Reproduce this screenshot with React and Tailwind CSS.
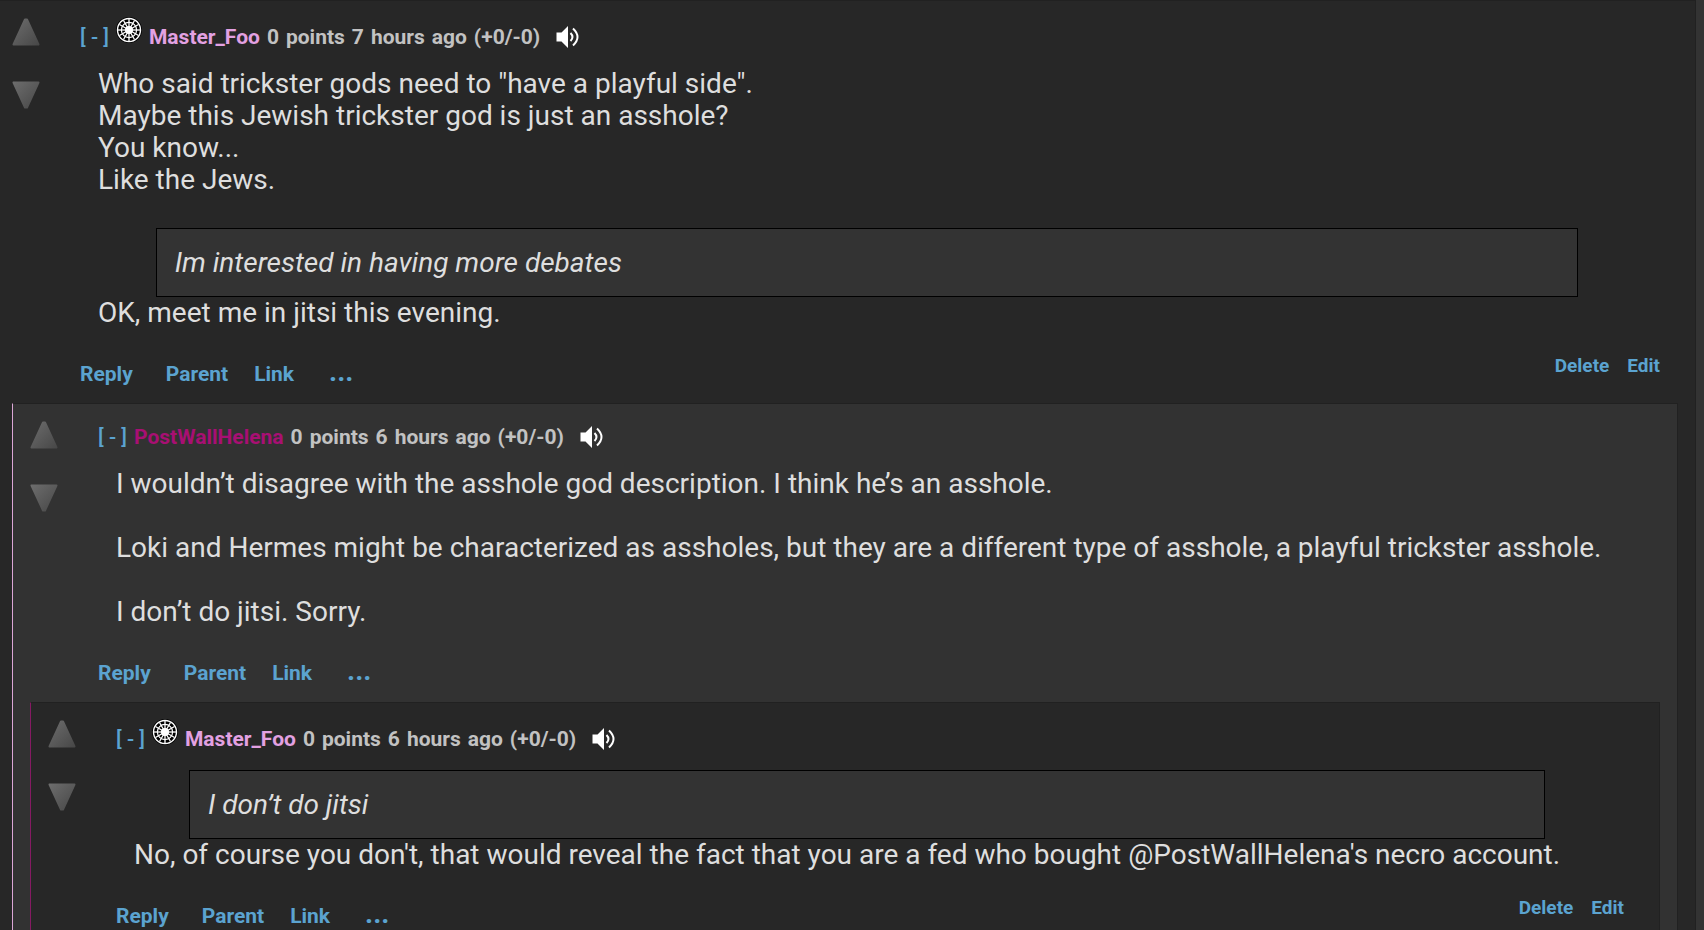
const thread = {
    id: 1,
    author: 'Master_Foo',
    age: '7 hours ago',
    mine: true,
    body: [
        {
            type: 'text',
            lines: [
                'Who said trickster gods need to "have a playful side".',
                'Maybe this Jewish trickster god is just an asshole?',
                'You know...',
                'Like the Jews.',
            ],
        },
        { type: 'quote', lines: ['Im interested in having more debates'] },
        { type: 'text', lines: ['OK, meet me in jitsi this evening.'] },
    ],
    replies: [
        {
            id: 2,
            author: 'PostWallHelena',
            age: '6 hours ago',
            mine: false,
            body: [
                { type: 'text', lines: ['I wouldn’t disagree with the asshole god description. I think he’s an asshole.'] },
                {
                    type: 'text',
                    lines: ['Loki and Hermes might be characterized as assholes, but they are a different type of asshole, a playful trickster asshole.'],
                },
                { type: 'text', lines: ['I don’t do jitsi. Sorry.'] },
            ],
            replies: [
                {
                    id: 3,
                    author: 'Master_Foo',
                    age: '6 hours ago',
                    mine: true,
                    body: [
                        { type: 'quote', lines: ['I don’t do jitsi'] },
                        {
                            type: 'text',
                            lines: ["No, of course you don't, that would reveal the fact that you are a fed who bought @PostWallHelena's necro account."],
                        },
                    ],
                    replies: [],
                },
            ],
        },
    ],
};

// background and left edge for each nesting level
const levels = [
    'bg-[#272727] border-l-[#272727] -ml-[6px] mr-2',
    'bg-[#323232] border-l-[#dba6d6] ml-[17px] mr-[17px]',
    'bg-[#272727] border-l-[#861a63] ml-[17px] mr-[17px]',
];

export default function App() {
    return (
        <main className="overflow-x-hidden bg-[#333333] font-['Roboto',sans-serif] text-[#dedede]">
            <Comment comment={thread} depth={0} />
        </main>
    );
}

function Comment({ comment, depth }) {
    return (
        <article className={`border-t border-r border-l border-t-[#212121] border-r-[#212121] ${levels[depth]}`}>
            <div className="flex pl-[17px] pr-[35px]">
                <Votes />
                <div className="ml-10 min-w-0 flex-1 pt-4">
                    <Header comment={comment} />
                    <Body blocks={comment.body} />
                    <Actions mine={comment.mine} />
                </div>
            </div>
            {comment.replies.map((reply) => (
                <Comment key={reply.id} comment={reply} depth={depth + 1} />
            ))}
        </article>
    );
}

function Votes() {
    return (
        <div className="flex w-7 shrink-0 flex-col gap-[35px] pt-[17px]">
            <button type="button" aria-label="Upvote" className="cursor-pointer">
                <Arrow />
            </button>
            <button type="button" aria-label="Downvote" className="cursor-pointer">
                <Arrow down />
            </button>
        </div>
    );
}

function Arrow({ down }) {
    const id = down ? 'arrow-down' : 'arrow-up';
    return (
        <svg className="block size-7" viewBox="0 0 28 28">
            <defs>
                <linearGradient id={id} x1="0" y1="0" x2="1" y2="1">
                    <stop offset="0" stopColor="#6c6c6c" />
                    <stop offset="1" stopColor="#484848" />
                </linearGradient>
            </defs>
            <path
                d={down ? 'M1.5 1.5h25L15 26.5h-2z' : 'M13 1.5h2L26.5 26.5h-25z'}
                fill={`url(#${id})`}
                stroke={`url(#${id})`}
                strokeWidth="2"
                strokeLinejoin="round"
            />
        </svg>
    );
}

function Header({ comment }) {
    return (
        <header className={`flex items-end text-[21px]/6 font-bold text-[#c2c2c2] ${comment.mine ? 'h-8' : 'h-[29px]'}`}>
            <button type="button" className="cursor-pointer font-medium text-[#5ba3d0]">[ - ]</button>
            {comment.mine && <Badge />}
            <a href="#user" className={`ml-[7px] ${comment.mine ? 'text-[#e3a1e2]' : 'text-[#a80f73]'}`}>
                {comment.author}
            </a>
            <div className="ml-[7px] flex gap-[7px]">
                <span>0</span>
                <span>points</span>
                <time className="flex gap-[7px]">
                    {comment.age.split(' ').map((word) => (
                        <span key={word}>{word}</span>
                    ))}
                </time>
                <span>(+0/-0)</span>
            </div>
            <button type="button" aria-label="Read aloud" className="ml-4 cursor-pointer text-white">
                <Speaker />
            </button>
        </header>
    );
}

function Badge() {
    const spokes = Array.from({ length: 12 }, (_, i) => i * 30);
    return (
        <svg className="ml-[7px] size-[26px] self-start" viewBox="0 0 26 26" fill="none">
            <circle cx="13" cy="13" r="13" fill="#000" />
            <circle cx="13" cy="13" r="11.5" stroke="#fff" strokeWidth="1.4" />
            <circle cx="13" cy="13" r="7.6" stroke="#fff" strokeWidth="1.2" />
            <circle cx="13" cy="13" r="4" fill="#fff" />
            {spokes.map((angle) => (
                <path key={angle} d="M13 13V2" stroke="#fff" strokeWidth="1.3" transform={`rotate(${angle} 13 13)`} />
            ))}
        </svg>
    );
}

function Speaker() {
    return (
        <svg className="block size-6" viewBox="0 0 24 24" fill="none" stroke="currentColor">
            <path d="M0.500 7.500h5l6.500-6.500v22l-6.500-6.500h-5z" fill="currentColor" stroke="none" />
            <path d="M14.500 8q4 4 0 8" strokeWidth="2" />
            <path d="M17 3.500q9 8.500 0 17" strokeWidth="2" />
        </svg>
    );
}

function Body({ blocks }) {
    return (
        <div className="mt-[19px] mr-6 mb-[31px] ml-[18px] text-[28px]/8">
            {blocks.map((block, i) => {
                const text = block.lines.map((line) => (
                    <span key={line} className="block">{line}</span>
                ));
                if (block.type === 'quote') {
                    return (
                        <blockquote key={i} className="mx-[3.75%] border border-black bg-[#333333] px-[18px] pt-[18px] pb-[17px] italic">
                            {text}
                        </blockquote>
                    );
                }
                // text straight after a quote sits against it
                return (
                    <p key={i} className={i === blocks.length - 1 ? '' : 'mb-8'}>
                        {text}
                    </p>
                );
            })}
        </div>
    );
}

function Actions({ mine }) {
    return (
        <footer className="flex items-start justify-between pb-[19px] font-bold text-[#5ba3d0]">
            <div className="flex h-6 items-baseline text-[21px]/6">
                <a href="#reply">Reply</a>
                <a href="#parent" className="ml-[33px]">Parent</a>
                <a href="#link" className="ml-[26px]">Link</a>
                <button type="button" aria-label="More" className="ml-[35px] cursor-pointer text-[28px]/6">...</button>
            </div>
            {mine && (
                <div className="-mt-[6px] flex gap-[18px] text-[19px]/6">
                    <a href="#delete">Delete</a>
                    <a href="#edit">Edit</a>
                </div>
            )}
        </footer>
    );
}
